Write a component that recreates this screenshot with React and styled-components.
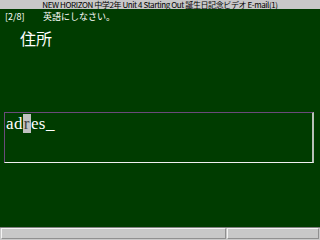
import React from "react";
import styled, { createGlobalStyle } from "styled-components";

const Global = createGlobalStyle`
  html, body { margin: 0; padding: 0; background: #003c00; }
  #root { width: 320px; height: 240px; overflow: hidden; }
`;

const Screen = styled.div`
  width: 320px;
  height: 240px;
  display: flex;
  flex-direction: column;
  background: #003c00;
`;

const TitleBar = styled.div`
  height: 9px;
  background: #c8c8c8;
  color: #000;
  font-family: "Noto Sans CJK JP", "DejaVu Sans", sans-serif;
  font-size: 8px;
  line-height: 9px;
  text-align: center;
  white-space: nowrap;
  overflow: hidden;
  letter-spacing: -0.4px;
`;

const Main = styled.div`
  flex: 1;
  display: flex;
  flex-direction: column;
`;

const PromptRow = styled.div`
  display: flex;
  margin-top: 3px;
  padding-left: 5px;
  height: 10px;
  color: #fff;
  font-family: "Noto Sans CJK JP", "DejaVu Sans", sans-serif;
  font-size: 9px;
  line-height: 10px;
`;

const Counter = styled.span`
  width: 38px;
`;

const Question = styled.div`
  margin-top: 8px;
  padding-left: 20px;
  color: #fff;
  font-family: "Noto Sans CJK JP", sans-serif;
  font-size: 16px;
  line-height: 16px;
  height: 16px;
`;

const AnswerBox = styled.div`
  margin-top: 66px;
  margin-left: 4px;
  width: 306px;
  height: 47px;
  border-top: 1px solid #6a4a7a;
  border-left: 1px solid #6a4a7a;
  border-right: 2px solid #b8c0b8;
  border-bottom: 1px solid #f0f0f0;
  color: #fff;
  font-family: "Liberation Serif", serif;
  font-size: 17px;
  letter-spacing: 0.4px;
  line-height: 18px;
  padding: 2px 0 0 1px;
  box-sizing: content-box;
`;

const Caret = styled.span`
  background: #c0c0c0;
  color: #404040;
  padding: 0 1px;
`;

const StatusBar = styled.div`
  height: 13px;
  box-sizing: border-box;
  border-top: 1px solid #808080;
  background: #c8c8c8;
  display: flex;
  gap: 1px;
  padding: 0 1px 1px 1px;
`;

const Panel = styled.div`
  flex: ${(p) => p.$flex};
  box-sizing: border-box;
  border-top: 1px solid #f4f4f4;
  border-left: 1px solid #f4f4f4;
  border-right: 1px solid #909090;
  border-bottom: 1px solid #909090;
`;

export default function App() {
  return (
    <>
      <Global />
      <Screen>
        <TitleBar>NEW HORIZON 中学2年 Unit 4 Starting Out 誕生日記念ビデオ E-mail(1)</TitleBar>
        <Main>
          <PromptRow>
            <Counter>[2/8]</Counter>
            <span>英語にしなさい。</span>
          </PromptRow>
          <Question>住所</Question>
          <AnswerBox>
            ad<Caret>r</Caret>es_
          </AnswerBox>
        </Main>
        <StatusBar>
          <Panel $flex="226" />
          <Panel $flex="91" />
        </StatusBar>
      </Screen>
    </>
  );
}
